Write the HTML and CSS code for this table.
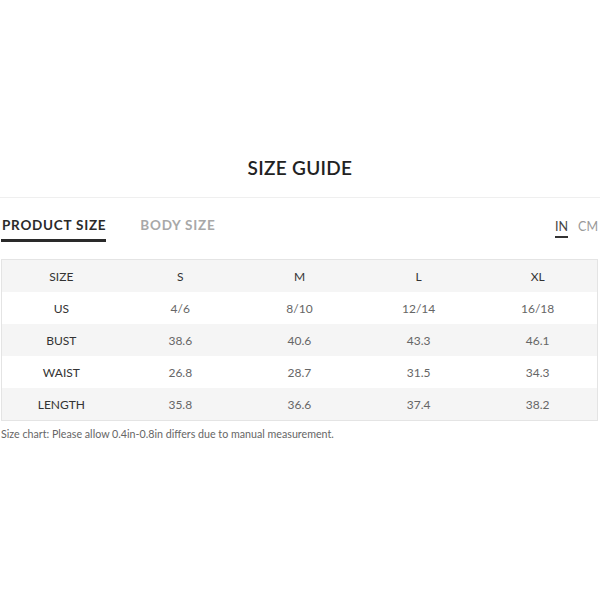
FILE: index.html
```html
<!DOCTYPE html>
<html>
<head>
<meta charset="utf-8">
<link rel="stylesheet" href="styles.css">
</head>
<body>
<div class="page">
  <h1 class="title">SIZE GUIDE</h1>
  <div class="divider"></div>
  <div class="bar">
    <div class="tabs">
      <span class="tab active">PRODUCT SIZE</span>
      <span class="tab">BODY SIZE</span>
    </div>
    <div class="units">
      <span class="unit active">IN</span>
      <span class="unit">CM</span>
    </div>
  </div>
  <table class="chart">
    <tr class="shade"><td>SIZE</td><td>S</td><td>M</td><td>L</td><td>XL</td></tr>
    <tr><td class="label">US</td><td>4/6</td><td>8/10</td><td>12/14</td><td>16/18</td></tr>
    <tr class="shade"><td class="label">BUST</td><td>38.6</td><td>40.6</td><td>43.3</td><td>46.1</td></tr>
    <tr><td class="label">WAIST</td><td>26.8</td><td>28.7</td><td>31.5</td><td>34.3</td></tr>
    <tr class="shade"><td class="label">LENGTH</td><td>35.8</td><td>36.6</td><td>37.4</td><td>38.2</td></tr>
  </table>
  <p class="note">Size chart: Please allow 0.4in-0.8in differs due to manual measurement.</p>
</div>
</body>
</html>
```
FILE: styles.css
```css
html, body {
  margin: 0;
  padding: 0;
  background: #fff;
}
body {
  font-family: "Lato", "Liberation Sans", sans-serif;
  color: #333;
}
.page {
  width: 600px;
  padding-top: 156px;
}
.title {
  margin: 0;
  text-align: center;
  font-size: 19px;
  line-height: 24px;
  font-weight: 600;
  letter-spacing: 0.3px;
  color: #222;
}
.divider {
  margin-top: 17px;
  height: 1px;
  background: #efefef;
}
.bar {
  display: flex;
  justify-content: space-between;
  align-items: flex-start;
  padding: 15px 2px 0 1px;
  height: 46px;
}
.tabs {
  display: flex;
  gap: 33px;
}
.tab {
  font-size: 13.5px;
  line-height: 20px;
  font-weight: 700;
  letter-spacing: 0.75px;
  color: #a8a8a8;
  padding: 2px 0 4px 1px;
  border-bottom: 3px solid transparent;
}
.tab.active {
  color: #2a2a2a;
  border-bottom-color: #2a2a2a;
}
.units {
  display: flex;
  gap: 10px;
  padding-top: 7px;
}
.unit {
  font-size: 12.5px;
  line-height: 14px;
  letter-spacing: 0;
  color: #999;
  padding-bottom: 2px;
  border-bottom: 2px solid transparent;
}
.unit.active {
  color: #444;
  border-bottom-color: #333;
}
.chart {
  margin-left: 1px;
  width: 597px;
  border-collapse: collapse;
  border: 1px solid #e4e4e4;
  table-layout: fixed;
}
.chart td {
  height: 32px;
  padding: 0;
  text-align: center;
  font-size: 12px;
  color: #666;
}
.chart td:first-child {
  color: #333;
}
.chart tr.shade td {
  background: #f5f5f5;
}
.chart tr:first-child td {
  color: #333;
}
.note {
  margin: 6px 0 0 1px;
  font-size: 10.7px;
  line-height: 14px;
  color: #666;
}
```
